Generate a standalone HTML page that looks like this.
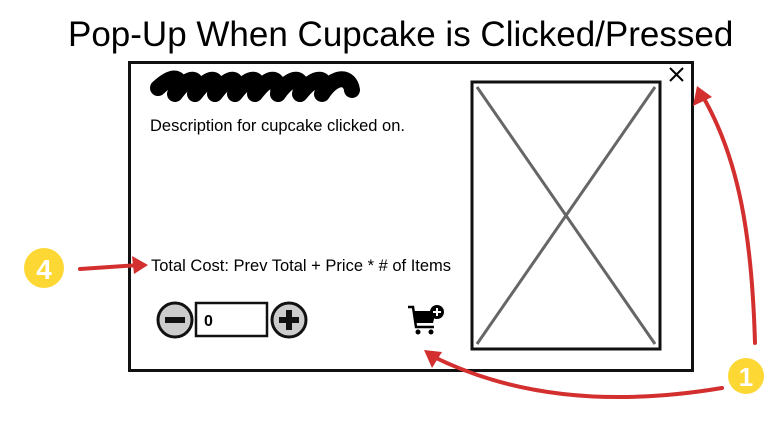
<!DOCTYPE html>
<html><head><style>
body{margin:0;width:780px;height:422px;background:#fff;overflow:hidden;position:relative;font-family:"Liberation Sans",sans-serif}
.t{position:absolute;left:68px;top:15px;font-size:35px;color:#000;white-space:nowrap}
.s{position:absolute;font-size:16.5px;color:#000;white-space:nowrap}
</style></head><body>
<div class="t">Pop-Up When Cupcake is Clicked/Pressed</div>
<svg width="780" height="422" style="position:absolute;left:0;top:0">
<rect x="129.5" y="62.5" width="563" height="308" fill="none" stroke="#111" stroke-width="3"/>
<rect x="472" y="82" width="188" height="267" fill="none" stroke="#111" stroke-width="3"/>
<line x1="477" y1="87" x2="655" y2="344" stroke="#666" stroke-width="3"/>
<line x1="655" y1="87" x2="477" y2="344" stroke="#666" stroke-width="3"/>
<path d="M670 68 L683 81 M683 68 L670 81" stroke="#000" stroke-width="2"/>
<path d="M158 88 C175 72 185 78 175 94 C190 74 200 76 195 94 C210 74 220 76 215 94 C230 74 240 76 235 94 C250 74 262 76 255 94 C270 74 280 76 278 94 C292 74 305 76 300 94 C315 74 330 76 322 94 C335 74 350 76 352 90" fill="none" stroke="#000" stroke-width="16" stroke-linecap="round" stroke-linejoin="round"/>
<circle cx="175" cy="320" r="17" fill="#ccc" stroke="#111" stroke-width="3"/>
<rect x="165" y="317" width="20" height="6" fill="#111"/>
<circle cx="289" cy="320" r="17" fill="#ccc" stroke="#111" stroke-width="3"/>
<rect x="279" y="317" width="20" height="6" fill="#111"/><rect x="286" y="310" width="6" height="20" fill="#111"/>
<rect x="196" y="303" width="71" height="33" fill="#fff" stroke="#111" stroke-width="2.5"/>
<text x="204" y="326" font-size="16" font-weight="bold" font-family="Liberation Sans">0</text>
<path d="M408 307 L413 307 L416 327 L434 327" fill="none" stroke="#000" stroke-width="2.5"/>
<path d="M413 311 L436 311 L433 323 L415 323 Z" fill="#000"/>
<circle cx="418" cy="332" r="2.5" fill="#000"/><circle cx="431" cy="332" r="2.5" fill="#000"/>
<circle cx="437" cy="312" r="7" fill="#000"/><path d="M433 312 H441 M437 308 V316" stroke="#fff" stroke-width="2"/>
<g fill="none" stroke="#d32f2f" stroke-width="4" stroke-linecap="round">
<path d="M80 269 L140 265"/>
<path d="M755 343 C752 240 740 160 702 95"/>
<path d="M722 388 C620 405 520 400 432 356"/>
</g>
<g fill="#d32f2f">
<path d="M148 265 L132 256 L134 274 Z"/>
<path d="M697 86 L693 106 L712 97 Z"/>
<path d="M424 350 L432 368 L442 352 Z"/>
</g>
<circle cx="44" cy="268" r="20" fill="#fdd835"/>
<text x="44" y="279" font-size="28" font-weight="bold" fill="#fff" text-anchor="middle" font-family="Liberation Sans">4</text>
<circle cx="746" cy="376" r="18" fill="#fdd835"/>
<text x="746" y="386" font-size="26" font-weight="bold" fill="#fff" text-anchor="middle" font-family="Liberation Sans">1</text>
</svg>
<div class="s" style="left:150px;top:117px">Description for cupcake clicked on.</div>
<div class="s" style="left:151px;top:257px">Total Cost: Prev Total + Price * # of Items</div>
</body></html>
